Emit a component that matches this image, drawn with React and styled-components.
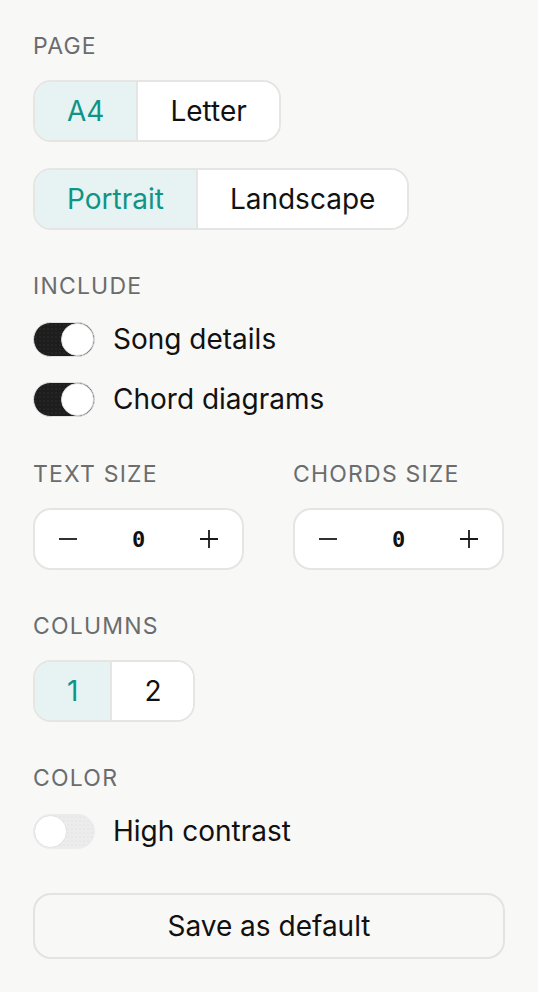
import React from "react";
import styled, { createGlobalStyle } from "styled-components";

const Global = createGlobalStyle`
  html, body { margin: 0; padding: 0; background: #f8f8f7; }
  body { font-family: Inter, "Noto Sans", sans-serif; color: #111; -webkit-font-smoothing: antialiased; }
  * { box-sizing: border-box; }
`;

const Panel = styled.div`
  display: flex;
  flex-direction: column;
  gap: 43px;
  padding: 33px 33px 36px 33px;
  width: 538px;
  min-height: 992px;
  background: #f8f8f7;
`;

const Section = styled.section`
  display: flex;
  flex-direction: column;
  gap: 21px;
`;

const Label = styled.div`
  font-size: 23px;
  line-height: 26px;
  font-weight: 400;
  letter-spacing: 1.2px;
  text-transform: uppercase;
  color: #6c6c6c;
`;

const Stack = styled.div`
  display: flex;
  flex-direction: column;
  align-items: flex-start;
  gap: ${(p) => p.$gap || 26}px;
`;

const Segmented = styled.div`
  display: inline-flex;
  height: 62px;
  border: 2px solid #e5e5e4;
  border-radius: 18px;
  overflow: hidden;
  background: #fff;
`;

const Segment = styled.button`
  all: unset;
  display: flex;
  align-items: center;
  justify-content: center;
  padding: 0 32px;
  font-family: Inter, sans-serif;
  font-size: 28px;
  font-weight: 400;
  color: ${(p) => (p.$active ? "#0f9488" : "#111")};
  background: ${(p) => (p.$active ? "#e6f3f2" : "#fff")};
  & + & {
    border-left: 2px solid #e5e5e4;
  }
`;

const ToggleRow = styled.label`
  display: flex;
  align-items: center;
  gap: 18px;
  font-size: 28px;
  line-height: 38px;
  font-weight: 400;
  color: #111;
`;

const Track = styled.span`
  position: relative;
  display: block;
  width: 62px;
  height: 35px;
  border-radius: 18px;
  border: 1px solid ${(p) => (p.$on ? "#e0e0e0" : "#ececec")};
  background-color: ${(p) => (p.$on ? "#1d1d1d" : "#ececec")};
  background-image: radial-gradient(
    ${(p) => (p.$on ? "rgba(255,255,255,0.08)" : "rgba(0,0,0,0.04)")} 0.6px,
    transparent 0.8px
  );
  background-size: 4px 4px;
`;

const Knob = styled.span`
  position: absolute;
  top: 0;
  ${(p) => (p.$on ? "right: 0;" : "left: 0;")}
  width: 33px;
  height: 33px;
  border-radius: 50%;
  background: #fff;
  border: 1px solid #e2e2e2;
`;

const TwoCols = styled.div`
  display: grid;
  grid-template-columns: 211px 211px;
  column-gap: 49px;
`;

const Stepper = styled.div`
  display: grid;
  grid-template-columns: 66px 1fr 66px;
  align-items: center;
  height: 62px;
  border: 2px solid #e5e5e4;
  border-radius: 18px;
  background: #fff;
`;

const StepButton = styled.button`
  all: unset;
  display: flex;
  align-items: center;
  justify-content: center;
  height: 100%;
  color: #1a1a1a;
`;

const StepValue = styled.span`
  text-align: center;
  font-family: "DejaVu Sans Mono", "Liberation Mono", monospace;
  font-size: 22px;
  font-weight: 600;
  color: #111;
`;

const SaveButton = styled.button`
  all: unset;
  display: flex;
  align-items: center;
  justify-content: center;
  height: 62px;
  border: 2px solid #e3e3e2;
  border-radius: 18px;
  font-family: Inter, sans-serif;
  font-size: 28px;
  font-weight: 400;
  color: #111;
`;

const Minus = () => (
  <svg width="20" height="20" viewBox="0 0 20 20" fill="none" stroke="currentColor" strokeWidth="1.8">
    <path d="M1 10h18" />
  </svg>
);
const Plus = () => (
  <svg width="20" height="20" viewBox="0 0 20 20" fill="none" stroke="currentColor" strokeWidth="1.8">
    <path d="M1 10h18M10 1v18" />
  </svg>
);

const Toggle = ({ on, children }) => (
  <ToggleRow>
    <Track $on={on}>
      <Knob $on={on} />
    </Track>
    {children}
  </ToggleRow>
);

const Step = ({ label }) => (
  <Section>
    <Label>{label}</Label>
    <Stepper>
      <StepButton aria-label="decrease"><Minus /></StepButton>
      <StepValue>0</StepValue>
      <StepButton aria-label="increase"><Plus /></StepButton>
    </Stepper>
  </Section>
);

export default function App() {
  return (
    <>
      <Global />
      <Panel>
        <Section>
          <Label>Page</Label>
          <Stack>
            <Segmented>
              <Segment $active>A4</Segment>
              <Segment>Letter</Segment>
            </Segmented>
            <Segmented>
              <Segment $active>Portrait</Segment>
              <Segment>Landscape</Segment>
            </Segmented>
          </Stack>
        </Section>
        <Section>
          <Label>Include</Label>
          <Stack $gap={22}>
            <Toggle on>Song details</Toggle>
            <Toggle on>Chord diagrams</Toggle>
          </Stack>
        </Section>
        <TwoCols>
          <Step label="Text size" />
          <Step label="Chords size" />
        </TwoCols>
        <Section>
          <Label>Columns</Label>
          <Stack>
            <Segmented>
              <Segment $active>1</Segment>
              <Segment>2</Segment>
            </Segmented>
          </Stack>
        </Section>
        <Section>
          <Label>Color</Label>
          <Stack>
            <Toggle>High contrast</Toggle>
          </Stack>
        </Section>
        <SaveButton>Save as default</SaveButton>
      </Panel>
    </>
  );
}
